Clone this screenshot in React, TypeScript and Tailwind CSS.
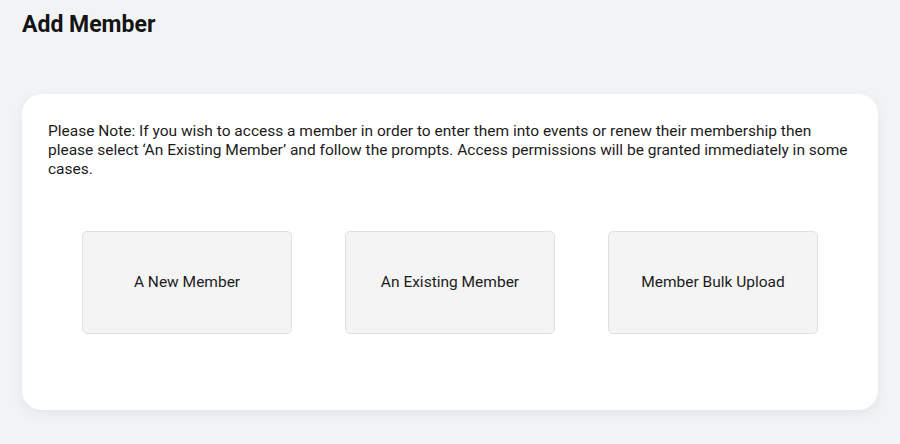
const options = ["A New Member", "An Existing Member", "Member Bulk Upload"];

export default function App() {
  return (
    <div className="min-h-screen w-full bg-[#f2f3f5] px-[22px] pt-[10px] pb-[34px] font-['Roboto',sans-serif] text-[#1a1a1a]">
      <h1 className="text-[23px] leading-[30px] font-bold text-[#141414]">
        Add Member
      </h1>
      <section className="mt-[54px] h-[316px] rounded-[20px] bg-white px-[26px] pt-[28px] shadow-[0_4px_14px_rgba(0,0,0,0.06)]">
        <p className="text-[15.5px] leading-[19px] text-[#1c1c1c]">
          Please Note: If you wish to access a member in order to enter them
          into events or renew their membership then please select ‘An
          Existing Member’ and follow the prompts. Access permissions will be
          granted immediately in some cases.
        </p>
        <div className="mt-[52px] flex justify-center gap-[53px]">
          {options.map((label) => (
            <button
              key={label}
              className="flex h-[103px] w-[210px] items-center justify-center rounded-[5px] border border-[#e0e0e0] bg-[#f4f4f4] text-[15.5px] text-[#1c1c1c]"
            >
              {label}
            </button>
          ))}
        </div>
      </section>
    </div>
  );
}
